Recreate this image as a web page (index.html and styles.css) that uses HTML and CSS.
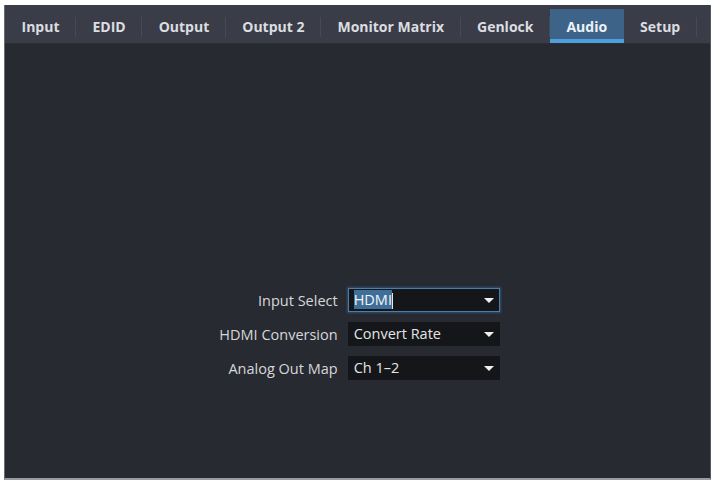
FILE: index.html
```html
<!DOCTYPE html>
<html lang="en">
<head>
  <meta charset="UTF-8">
  <title>Audio</title>
  <link rel="stylesheet" href="styles.css">
</head>
<body>
  <div class="panel">
    <div class="tabs">
      <div class="tab">Input</div>
      <div class="tab">EDID</div>
      <div class="tab">Output</div>
      <div class="tab">Output 2</div>
      <div class="tab">Monitor Matrix</div>
      <div class="tab">Genlock</div>
      <div class="tab active">Audio</div>
      <div class="tab">Setup</div>
    </div>

    <div class="content">
      <div class="form">
        <label>Input Select</label>
        <div class="select focused"><span class="sel">HDMI</span><span class="caret"></span><span class="arrow"></span></div>

        <label>HDMI Conversion</label>
        <div class="select">Convert Rate<span class="arrow"></span></div>

        <label>Analog Out Map</label>
        <div class="select">Ch 1&ndash;2<span class="arrow"></span></div>
      </div>
    </div>
  </div>
</body>
</html>
```

FILE: styles.css
```css
body {
  margin: 0;
  background: #fff;
  font-family: "Open Sans", "DejaVu Sans", sans-serif;
}
.panel {
  margin: 5px 3px 0 4px;
  height: 475px;
  display: flex;
  flex-direction: column;
  background: #282a32;
  border-left: 1px solid #6a6c72;
  border-right: 1px solid #55575c;
  border-bottom: 2px solid #9a9ca0;
  box-sizing: border-box;
}
.tabs {
  display: flex;
  align-items: flex-end;
  height: 39px;
  box-sizing: border-box;
  padding-top: 4px;
  background: #3a3d48;
  border-bottom: 1px solid #2c2e36;
}
.tab {
  position: relative;
  padding: 0 16.5px;
  height: 34px;
  line-height: 35px;
  font-size: 14px;
  font-weight: 700;
  color: #dcdde0;
  box-sizing: border-box;
}
.tab::after {
  content: "";
  position: absolute;
  right: 0;
  top: 8px;
  height: 20px;
  border-right: 1px solid #474a55;
}
.tab.active {
  background: #3d6488;
  border-bottom: 4px solid #4da0dc;
  color: #eef2f6;
}
.tab.active::after {
  display: none;
}
.content {
  flex: 1;
  padding: 244px 0 0 4px;
}
.form {
  display: grid;
  grid-template-columns: auto 152px;
  justify-content: center;
  align-items: center;
  column-gap: 10px;
  row-gap: 10px;
}
.form label {
  text-align: right;
  font-size: 14.5px;
  color: #d6d7da;
}
.select {
  position: relative;
  height: 24px;
  line-height: 24px;
  padding-left: 6px;
  background: #151619;
  color: #e4e5e7;
  font-size: 14.5px;
  box-sizing: border-box;
}
.select.focused {
  border: 1px solid #4d7ea6;
  box-shadow: 0 0 2px 1px #2f5070;
  line-height: 22px;
  padding-left: 5px;
}
.sel {
  background: #3f6f98;
  color: #f2f6fa;
}
.caret {
  display: inline-block;
  width: 1px;
  height: 16px;
  background: #e8e8e8;
  vertical-align: middle;
}
.arrow {
  position: absolute;
  right: 6px;
  top: 10px;
  border-left: 5px solid transparent;
  border-right: 5px solid transparent;
  border-top: 5px solid #f0f0f0;
}
.select.focused .arrow {
  top: 9px;
  right: 5px;
}
```
